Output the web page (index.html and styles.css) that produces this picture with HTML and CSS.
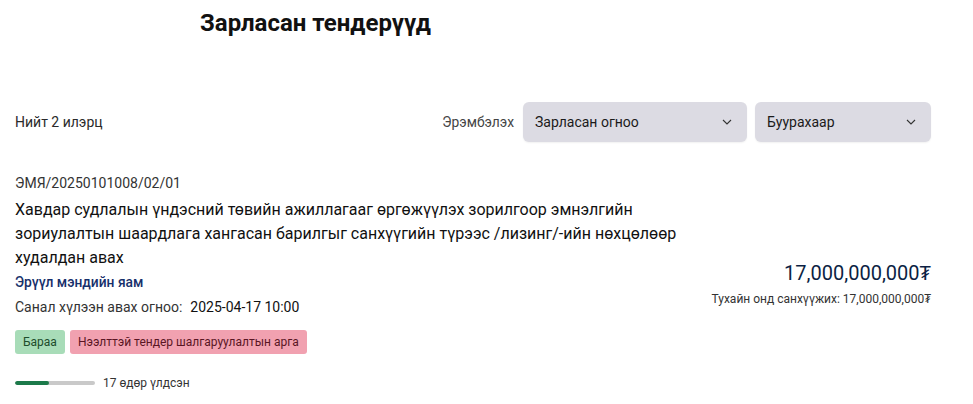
FILE: index.html
```html
<!DOCTYPE html>
<html lang="mn">
<head>
<meta charset="utf-8">
<link rel="stylesheet" href="styles.css">
</head>
<body>
<div class="page">
  <h1 class="title">Зарласан тендерүүд</h1>
  <div class="toolbar">
    <div class="count">Нийт 2 илэрц</div>
    <div class="sort">
      <span class="sort-label">Эрэмбэлэх</span>
      <div class="select select-wide">
        <span>Зарласан огноо</span>
        <svg class="chev" width="10" height="6" viewBox="0 0 10 6"><path d="M1 1l4 4 4-4" fill="none" stroke="#333" stroke-width="1.1"/></svg>
      </div>
      <div class="select select-narrow">
        <span>Буурахаар</span>
        <svg class="chev" width="10" height="6" viewBox="0 0 10 6"><path d="M1 1l4 4 4-4" fill="none" stroke="#333" stroke-width="1.1"/></svg>
      </div>
    </div>
  </div>
  <div class="card">
    <div class="card-main">
      <div class="code">ЭМЯ/20250101008/02/01</div>
      <div class="name">Хавдар судлалын үндэсний төвийн ажиллагааг өргөжүүлэх зорилгоор эмнэлгийн зориулалтын шаардлага хангасан барилгыг санхүүгийн түрээс /лизинг/-ийн нөхцөлөөр худалдан авах</div>
      <div class="org">Эрүүл мэндийн яам</div>
      <div class="date"><span class="date-label">Санал хүлээн авах огноо:</span><span class="date-value">2025-04-17 10:00</span></div>
      <div class="tags">
        <span class="tag tag-green">Бараа</span>
        <span class="tag tag-pink">Нээлттэй тендер шалгаруулалтын арга</span>
      </div>
      <div class="progress-row">
        <div class="progress"><div class="progress-fill" style="width:42%"></div></div>
        <span class="remain">17 өдөр үлдсэн</span>
      </div>
    </div>
    <div class="card-side">
      <div class="price">17,000,000,000₮</div>
      <div class="yearly">Тухайн онд санхүүжих: 17,000,000,000₮</div>
    </div>
  </div>
</div>
</body>
</html>
```

FILE: styles.css
```css
* { box-sizing: border-box; }
html, body { margin: 0; padding: 0; background: #fff; }
body {
  font-family: Roboto, "Noto Sans", sans-serif;
  color: #1a1a1a;
}
.page {
  width: 946px;
  padding: 0 15px;
}
.title {
  margin: 0;
  padding: 8px 0 0 185px;
  font-size: 24px;
  font-weight: 700;
  line-height: 30px;
  color: #111;
}
.toolbar {
  display: flex;
  align-items: center;
  justify-content: space-between;
  margin-top: 64px;
}
.count {
  font-size: 14px;
  color: #2a2a2a;
}
.sort {
  display: flex;
  align-items: center;
  gap: 8px;
}
.sort-label {
  font-size: 13.8px;
  color: #444;
  margin-right: 1px;
}
.select {
  height: 40px;
  background: #dcdbe3;
  border-radius: 6px;
  display: flex;
  align-items: center;
  justify-content: space-between;
  padding: 0 15px 0 12px;
  font-size: 14px;
  color: #1a1a1a;
  box-shadow: 0 1px 2px rgba(0,0,0,0.06);
}
.select-wide { width: 224px; }
.select-narrow { width: 176px; }
.chev { display: block; }
.card {
  display: flex;
  justify-content: space-between;
  align-items: center;
  margin-top: 32px;
}
.card-main {
  width: 670px;
}
.code {
  font-size: 14px;
  color: #333;
  line-height: 18px;
}
.name {
  margin-top: 6px;
  font-size: 16px;
  line-height: 24px;
  color: #111;
}
.org {
  margin-top: 3px;
  font-size: 13.8px;
  font-weight: 500;
  color: #17306b;
  line-height: 18px;
}
.date {
  margin-top: 7px;
  font-size: 14px;
  line-height: 18px;
  color: #333;
}
.date-value {
  margin-left: 8px;
  color: #111;
}
.tags {
  margin-top: 14px;
  display: flex;
  gap: 5px;
}
.tag {
  height: 24px;
  line-height: 24px;
  padding: 0 8px;
  border-radius: 3px;
  font-size: 12px;
}
.tag-green { background: #a8dcb8; color: #1d4d2c; }
.tag-pink { background: #f1a1b0; color: #5a1624; }
.progress-row {
  margin-top: 22px;
  display: flex;
  align-items: center;
  gap: 8px;
}
.progress {
  width: 80px;
  height: 4px;
  background: #c9c9c9;
  border-radius: 2px;
  overflow: hidden;
}
.progress-fill {
  height: 100%;
  background: #1c7a4a;
  border-radius: 2px;
}
.remain {
  font-size: 12px;
  color: #333;
}
.card-side {
  text-align: right;
  margin-top: 2px;
}
.price {
  font-size: 20px;
  color: #0c1f44;
  line-height: 26px;
}
.yearly {
  margin-top: 4px;
  font-size: 12px;
  color: #333;
}
```
